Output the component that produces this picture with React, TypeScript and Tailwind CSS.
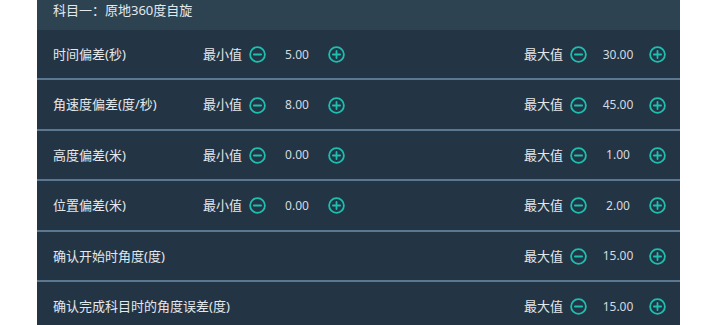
import React from "react";

type Row = { label: string; min?: string; max: string };

const rows: Row[] = [
    { label: "时间偏差(秒)", min: "5.00", max: "30.00" },
    { label: "角速度偏差(度/秒)", min: "8.00", max: "45.00" },
    { label: "高度偏差(米)", min: "0.00", max: "1.00" },
    { label: "位置偏差(米)", min: "0.00", max: "2.00" },
    { label: "确认开始时角度(度)", max: "15.00" },
    { label: "确认完成科目时的角度误差(度)", max: "15.00" },
];

function CircleIcon({ plus }: { plus?: boolean }) {
    return (
        <svg width="17" height="17" viewBox="0 0 17 17" fill="none" className="shrink-0">
            <circle cx="8.5" cy="8.5" r="7.4" stroke="#1dbfae" strokeWidth="1.8" />
            <path d="M4.9 8.5h7.2" stroke="#1dbfae" strokeWidth="1.8" strokeLinecap="round" />
            {plus && <path d="M8.5 4.9v7.2" stroke="#1dbfae" strokeWidth="1.8" strokeLinecap="round" />}
        </svg>
    );
}

function Stepper({ title, value }: { title: string; value: string }) {
    return (
        <div className="flex items-center">
            <span className="text-[13px] text-[#e3e8ec]">{title}</span>
            <span className="ml-[7px]">
                <CircleIcon />
            </span>
            <span className="w-[62px] text-center text-[12px] text-[#d3dbe0]">{value}</span>
            <CircleIcon plus />
        </div>
    );
}

export default function App() {
    return (
        <div
            className="w-[706px] h-[325px] overflow-hidden bg-white"
            style={{ fontFamily: '"Noto Sans", "Noto Sans CJK SC", sans-serif' }}
        >
            <div className="ml-[37px] w-[643px]">
                <div className="h-[30px] bg-[#2d4351] pl-[16px] text-[13px] leading-[20px] text-[#e3e8ec]">
                    科目一：原地360度自旋
                </div>

                {rows.map((row) => (
                    <div
                        key={row.label}
                        className="h-[50.4px] flex items-center bg-[#233445] border-b-2 border-[#5b7890] pl-[16px] pr-[14px] pt-[1px]"
                    >
                        <div className="w-[150px] text-[13px] text-[#e3e8ec] whitespace-nowrap">
                            {row.label}
                        </div>
                        {row.min && <Stepper title="最小值" value={row.min} />}
                        <div className="flex-1" />
                        <Stepper title="最大值" value={row.max} />
                    </div>
                ))}
            </div>
        </div>
    );
}
